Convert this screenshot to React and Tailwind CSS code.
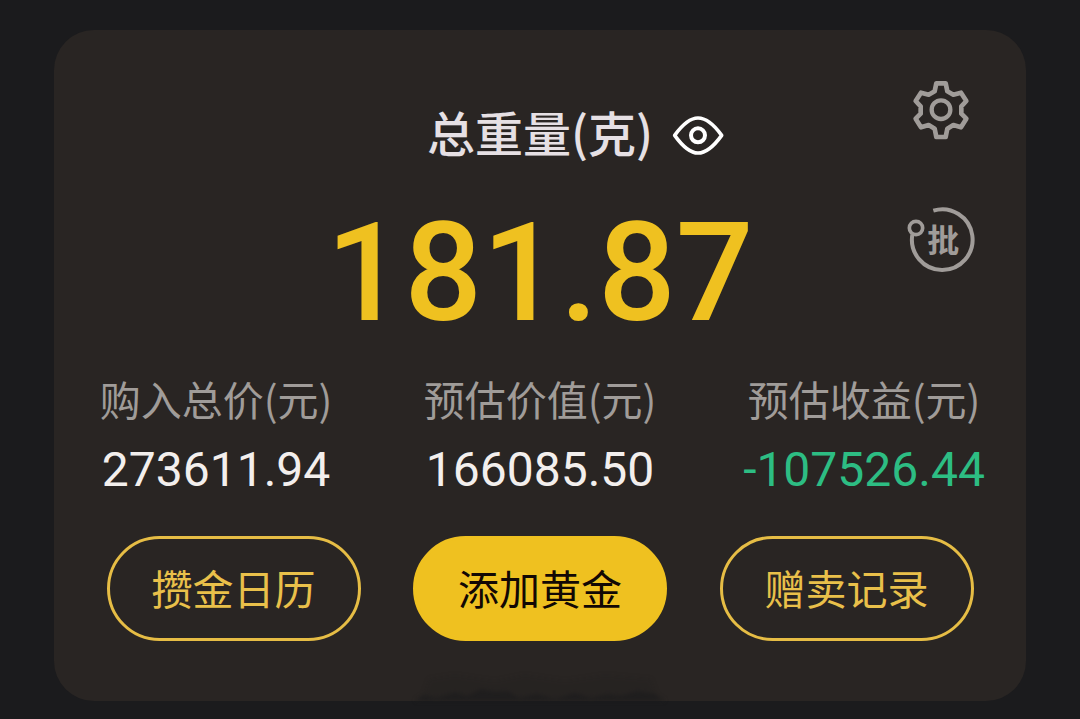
const STATS = [
    { label: '购入总价(元)', value: '273611.94', color: 'text-[#f3efed]' },
    { label: '预估价值(元)', value: '166085.50', color: 'text-[#f3efed]' },
    { label: '预估收益(元)', value: '-107526.44', color: 'text-[#2dbd83]' },
];

const ACTIONS = [
    { label: '攒金日历' },
    { label: '添加黄金', primary: true },
    { label: '赠卖记录' },
];

function EyeIcon() {
    return (
        <svg viewBox="751 56 162 129" className="h-[43px] w-[54px]" fill="none" stroke="currentColor" strokeWidth="11" strokeLinejoin="round">
            <path d="M762 120C785 88 810 68 832 68S880 88 903 120C880 152 855 173 832 173S785 152 762 120Z" />
            <circle cx="832" cy="120" r="21" strokeWidth="12" />
        </svg>
    );
}

function GearIcon() {
    return (
        <svg viewBox="60 50 186 195" className="h-[65px] w-[62px]" fill="none" stroke="currentColor" strokeWidth="14" strokeLinejoin="round">
            <path d="M139 69H167L172 93L190 103L213 97L229 122L214 138V160L229 175L213 201L190 194L172 205L167 230H139L134 205L116 194L93 201L77 175L92 160V138L77 122L93 97L116 103L134 93Z" />
            <circle cx="153" cy="148" r="28" strokeWidth="13" />
        </svg>
    );
}

function BatchIcon() {
    return (
        <svg viewBox="48 45 210 204" className="h-[68px] w-[70px]" fill="none" stroke="currentColor" strokeWidth="12">
            <path d="M130 62A91 91 0 1 1 67 134" />
            <circle cx="78" cy="114" r="20" strokeWidth="11" />
            <text x="160" y="185" textAnchor="middle" fill="currentColor" stroke="none" className="font-['Noto_Sans_CJK_SC',sans-serif] text-[96px] font-bold">批</text>
        </svg>
    );
}

// faint shadow along the lower edge of the card
function EdgeShadow() {
    return (
        <svg viewBox="0 0 250 34" className="absolute bottom-0 left-1/2 h-[34px] w-[250px] -translate-x-1/2 blur-[2px]" fill="#1b1b1d" aria-hidden="true">
            <path opacity="0.6" d="M0 34L8 28L22 31L40 25L52 29L66 22L80 25L92 24L104 31L122 27L140 32L160 26L176 31L192 27L206 29L222 24L240 27L250 34Z" />
            <path opacity="0.15" d="M6 34L14 12L40 8L80 14L110 8L150 14L190 8L236 12L244 34Z" />
        </svg>
    );
}

export default function App() {
    return (
        <div className="min-h-screen bg-[#1b1b1d] px-[5%] pt-[30px] pb-[18px] font-['Noto_Sans_CJK_SC',sans-serif]">
            <main className="relative rounded-[40px] bg-[#292523] pb-[60px]">
                <header className="grid grid-cols-[1fr_auto_1fr] pt-[47px]">
                    <h1 className="col-start-2 row-start-1 mt-[26px] text-[48px] leading-[56px] font-medium text-[#e6e0e4]">总重量(克)</h1>
                    <button type="button" aria-label="隐藏金额" className="col-start-3 row-start-1 mt-[30px] ml-[18px] flex h-14 items-center justify-self-start text-white">
                        <EyeIcon />
                    </button>
                    <p className="col-span-3 col-start-1 row-start-2 mt-10 text-center font-['Roboto',sans-serif] text-[137px] leading-[140px] font-medium text-[#efc120]">181.87</p>
                    <nav className="col-start-3 row-span-2 row-start-1 mr-[50px] flex flex-col items-center gap-[63px] self-start justify-self-end text-[#a09c99]">
                        <button type="button" aria-label="设置"><GearIcon /></button>
                        <button type="button" aria-label="批量"><BatchIcon /></button>
                    </nav>
                </header>

                <dl className="mt-[31px] grid grid-cols-3 text-center">
                    {STATS.map(s => (
                        <div key={s.label}>
                            <dt className="text-[41px] leading-[48px] text-[#a09c99]">{s.label}</dt>
                            <dd className={`mt-5 font-['Roboto',sans-serif] text-[48px] leading-[56px] ${s.color}`}>{s.value}</dd>
                        </div>
                    ))}
                </dl>

                <div className="mt-[38px] flex justify-evenly">
                    {ACTIONS.map(a => (
                        <button
                            key={a.label}
                            type="button"
                            className={`h-[105px] w-[254px] rounded-full border-[3px] pb-1 text-[41px] leading-[48px] ${a.primary ? 'border-[#efc120] bg-[#efc120] text-[#120804]' : 'border-[#e6bd45] text-[#e9c04a]'}`}
                        >
                            {a.label}
                        </button>
                    ))}
                </div>
                <EdgeShadow />
            </main>
        </div>
    );
}
